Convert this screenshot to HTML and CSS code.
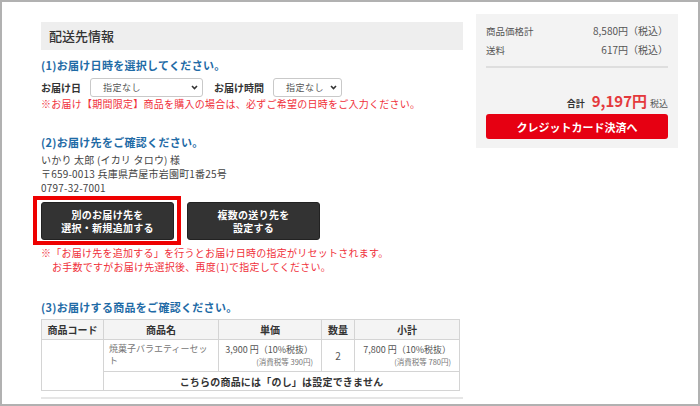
FILE: index.html
```html
<!DOCTYPE html>
<html lang="ja">
<head>
<meta charset="utf-8">
<title>配送先情報</title>
<link rel="stylesheet" href="styles.css">
</head>
<body>
<div class="frame">
  <div class="layout">
    <main class="main">
      <h2 class="section-bar">配送先情報</h2>

      <h3 class="step">(1)お届け日時を選択してください。</h3>
      <div class="date-row">
        <span class="label">お届け日</span>
        <div class="select select-date"><span>指定なし</span><svg class="chev" width="7" height="5" viewBox="0 0 7 5"><path d="M1 1l2.5 2.5L6 1" fill="none" stroke="#333" stroke-width="1.6"/></svg></div>
        <span class="label label-time">お届け時間</span>
        <div class="select select-time"><span>指定なし</span><svg class="chev" width="7" height="5" viewBox="0 0 7 5"><path d="M1 1l2.5 2.5L6 1" fill="none" stroke="#333" stroke-width="1.6"/></svg></div>
      </div>
      <p class="note">※お届け【期間限定】商品を購入の場合は、必ずご希望の日時をご入力ください。</p>

      <h3 class="step step-2">(2)お届け先をご確認ください。</h3>
      <div class="address">
        <p>いかり 太郎 (イカリ タロウ) 様</p>
        <p>〒659-0013 兵庫県芦屋市岩園町1番25号</p>
        <p>0797-32-7001</p>
      </div>
      <div class="btn-row">
        <button class="dark-btn highlighted">別のお届け先を<br>選択・新規追加する</button>
        <button class="dark-btn">複数の送り先を<br>設定する</button>
      </div>
      <p class="note note-2">※「お届け先を追加する」を行うとお届け日時の指定がリセットされます。<br><span class="indent">お手数ですがお届け先選択後、再度(1)で指定してください。</span></p>

      <h3 class="step step-3">(3)お届けする商品をご確認ください。</h3>
      <table class="items">
        <colgroup>
          <col class="c-code"><col class="c-name"><col class="c-price"><col class="c-qty"><col class="c-sub">
        </colgroup>
        <thead>
          <tr><th>商品コード</th><th>商品名</th><th>単価</th><th>数量</th><th>小計</th></tr>
        </thead>
        <tbody>
          <tr class="item-row">
            <td rowspan="2"></td>
            <td class="name">焼菓子バラエティーセット</td>
            <td class="money"><div>3,900 円（10%税抜）</div><div class="tax">(消費税等 390円)</div></td>
            <td class="qty">2</td>
            <td class="money"><div>7,800 円（10%税抜）</div><div class="tax">(消費税等 780円)</div></td>
          </tr>
          <tr class="noshi-row">
            <td colspan="4">こちらの商品には「のし」は設定できません</td>
          </tr>
        </tbody>
      </table>
      <div class="separator"></div>
    </main>

    <aside class="summary">
      <div class="sum-row"><span>商品価格計</span><span class="val">8,580円（税込）</span></div>
      <div class="sum-row sum-row-2"><span>送料</span><span class="val">617円（税込）</span></div>
      <div class="divider"></div>
      <div class="total"><span class="total-label">合計</span><span class="total-val">9,197円</span><span class="total-tax">税込</span></div>
      <button class="pay-btn">クレジットカード決済へ</button>
    </aside>
  </div>
</div>
</body>
</html>
```

FILE: styles.css
```css
* { box-sizing: border-box; margin: 0; padding: 0; }
html, body { width: 700px; height: 406px; background: #fff; }
body {
  font-family: "Noto Sans CJK JP", "Noto Sans", sans-serif;
  color: #333;
  font-size: 10px;
  overflow: hidden;
}
.frame {
  width: 700px;
  height: 406px;
  border: 2px solid #b1b1b1;
  padding: 12px 20px 0 39px;
  background: #fff;
}
.layout { display: flex; gap: 13px; align-items: flex-start; }
.main { width: 422px; margin-top: 8px; }

.section-bar {
  height: 28px;
  line-height: 28px;
  background: #eeeeee;
  padding-left: 8px;
  font-size: 13px;
  font-weight: 500;
  color: #333;
}
.step {
  margin-top: 7px;
  font-size: 11px;
  line-height: 16px;
  font-weight: 700;
  color: #1f6ba6;
  letter-spacing: 0.3px;
}
.step-2 { margin-top: 23px; }
.step-3 { margin-top: 26px; }

.date-row {
  display: flex;
  align-items: center;
  margin-top: 5px;
  height: 19px;
}
.label { font-weight: 700; font-size: 10px; color: #333; }
.label-time { margin-left: 11px; }
.select {
  height: 19px;
  border: 1px solid #c9c9c9;
  border-radius: 3px;
  background: #fff;
  display: flex;
  align-items: center;
  justify-content: space-between;
  padding: 0 4px 0 12px;
  font-size: 9px;
  color: #555;
  margin-left: 9px;
  letter-spacing: 0.5px;
}
.select-date { width: 113px; }
.select-time { width: 69px; margin-left: 9px; }
.chev { display: block; }

.note {
  color: #f0303a;
  font-size: 10px;
  line-height: 14px;
  letter-spacing: 0.25px;
}
.note-2 { margin-top: 6px; line-height: 13.5px; }
.indent { padding-left: 11px; }

.address { margin-top: 3px; font-size: 10px; line-height: 14px; color: #444; letter-spacing: 0.2px; }

.btn-row { display: flex; gap: 13px; margin-top: 7px; }
.dark-btn {
  width: 133px;
  height: 38px;
  background: #333;
  border: 1px solid #222;
  border-radius: 3px;
  color: #fff;
  font-family: inherit;
  font-size: 10px;
  font-weight: 700;
  line-height: 13.5px;
  letter-spacing: 0.3px;
}
.highlighted { position: relative; }
.highlighted::after {
  content: "";
  position: absolute;
  left: -9px;
  top: -7px;
  right: -8px;
  bottom: -6px;
  border: 4px solid #ee0000;
}

.items {
  margin-top: 4px;
  width: 418px;
  border-collapse: collapse;
  table-layout: fixed;
  font-size: 10px;
}
.c-code { width: 62px; }
.c-name { width: 115px; }
.c-price { width: 103px; }
.c-qty { width: 33px; }
.c-sub { width: 105px; }
.items th, .items td { border: 1px solid #d4d4d4; }
.items th {
  background: #f4f4f4;
  height: 20px;
  font-weight: 700;
  font-size: 10px;
  color: #333;
  text-align: center;
}
.item-row td { height: 32px; vertical-align: middle; }
.name {
  font-size: 9px;
  line-height: 12px;
  color: #777;
  padding: 0 4px 0 5px;
  vertical-align: top !important;
  padding-top: 3px !important;
}
.money { text-align: right; padding-right: 8px; color: #555; line-height: 12px; font-size: 9px; }
.tax { font-size: 7.5px; line-height: 11px; color: #777; }
.qty { text-align: center; color: #555; }
.noshi-row td {
  height: 19px;
  text-align: center;
  font-weight: 700;
  font-size: 10px;
  color: #333;
  letter-spacing: 0.2px;
}
.separator { margin-top: 6px; height: 2px; background: #e6e6e6; }

.summary {
  width: 202px;
  background: #f3f3f3;
  padding: 10px 10px 9px;
}
.sum-row {
  display: flex;
  justify-content: space-between;
  font-size: 9.5px;
  line-height: 14px;
  color: #555;
}
.sum-row .val { font-size: 10px; }
.sum-row-2 { margin-top: 5px; }
.divider { margin-top: 9px; height: 2px; background: #dedede; }
.total {
  margin-top: 23px;
  display: flex;
  justify-content: flex-end;
  align-items: baseline;
  height: 20px;
  line-height: 20px;
}
.total-label { font-size: 9px; font-weight: 700; color: #333; margin-right: 7px; }
.total-val { font-size: 15px; font-weight: 700; color: #e4393c; }
.total-tax { font-size: 9px; color: #555; margin-left: 3px; }
.pay-btn {
  display: block;
  width: 100%;
  margin-top: 3px;
  height: 25px;
  background: #e60012;
  border: none;
  border-radius: 3px;
  color: #fff;
  font-family: inherit;
  font-size: 11px;
  font-weight: 700;
}
```
